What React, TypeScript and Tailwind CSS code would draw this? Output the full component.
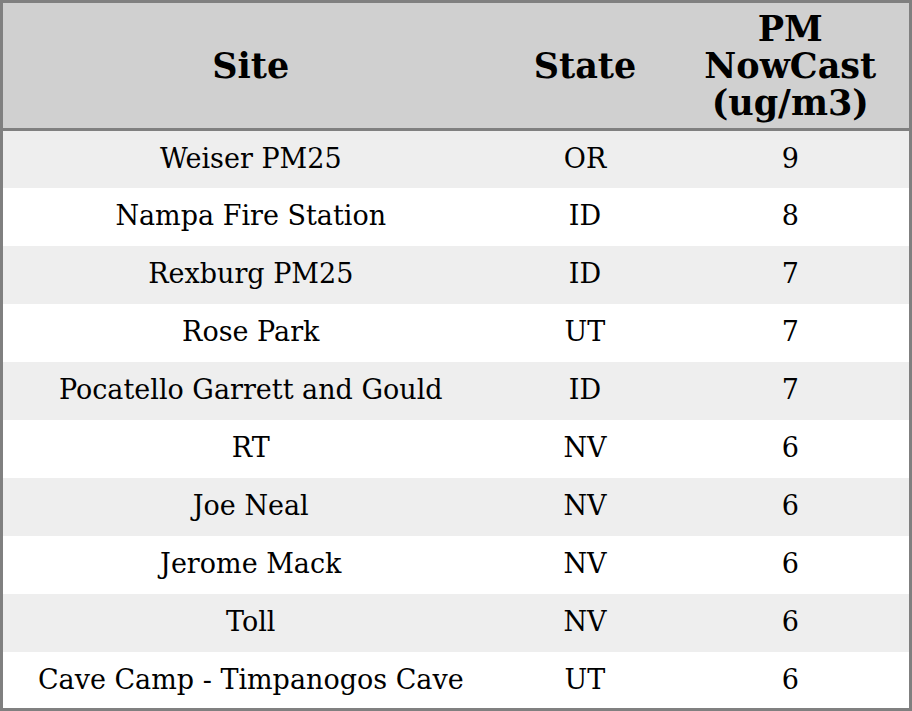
const rows: [string, string, number][] = [
  ["Weiser PM25", "OR", 9],
  ["Nampa Fire Station", "ID", 8],
  ["Rexburg PM25", "ID", 7],
  ["Rose Park", "UT", 7],
  ["Pocatello Garrett and Gould", "ID", 7],
  ["RT", "NV", 6],
  ["Joe Neal", "NV", 6],
  ["Jerome Mack", "NV", 6],
  ["Toll", "NV", 6],
  ["Cave Camp - Timpanogos Cave", "UT", 6],
];

export default function App() {
  return (
    <div className="w-[912px] h-[711px] bg-white font-['DejaVu_Serif',serif] text-black">
      <table className="w-full h-full border-[3px] border-[#808080] border-collapse table-fixed">
        <colgroup>
          <col className="w-[497px]" />
          <col className="w-[173px]" />
          <col />
        </colgroup>
        <thead>
          <tr className="h-[128px] bg-[#d0d0d0] border-b-[3px] border-[#808080]">
            <th className="text-[35px] leading-[37px] font-bold text-center">Site</th>
            <th className="text-[35px] leading-[37px] font-bold text-center">State</th>
            <th className="text-[35px] leading-[37px] font-bold text-center">
              PM
              <br />
              NowCast
              <br />
              (ug/m3)
            </th>
          </tr>
        </thead>
        <tbody>
          {rows.map(([site, state, v], i) => (
            <tr key={site} className={i % 2 === 0 ? "bg-[#eeeeee] h-[57.7px]" : "bg-white h-[57.7px]"}>
              <td className="text-[27px] text-center">{site}</td>
              <td className="text-[27px] text-center">{state}</td>
              <td className="text-[27px] text-center">{v}</td>
            </tr>
          ))}
        </tbody>
      </table>
    </div>
  );
}
